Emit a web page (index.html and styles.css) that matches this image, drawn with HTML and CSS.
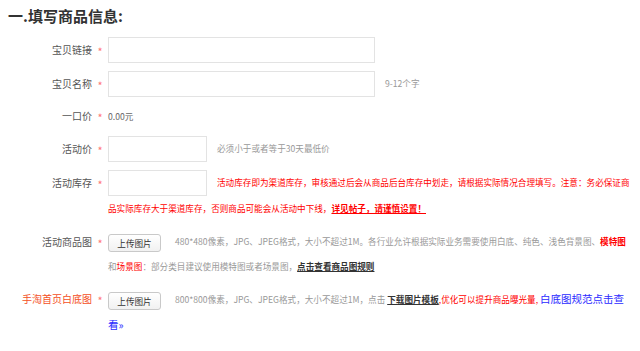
FILE: index.html
```html
<!DOCTYPE html>
<html lang="zh-CN">
<head>
  <meta charset="UTF-8">
  <meta name="viewport" content="width=device-width, initial-scale=1.0">
  <title>填写商品信息</title>
  <link rel="stylesheet" href="styles.css">
</head>
<body>
  <div class="page">
    <h2 class="section-title">一.填写商品信息:</h2>

    <div class="field">
      <label class="field-label">宝贝链接</label>
      <span class="required">*</span>
      <div class="field-body"><input class="text-input wide" type="text"></div>
    </div>

    <div class="field">
      <label class="field-label">宝贝名称</label>
      <span class="required">*</span>
      <div class="field-body hint"><input class="text-input wide" type="text">9-12个字</div>
    </div>

    <div class="field field-plain">
      <label class="field-label">一口价</label>
      <span class="required">*</span>
      <div class="field-body price">0.00元</div>
    </div>

    <div class="field">
      <label class="field-label">活动价</label>
      <span class="required">*</span>
      <div class="field-body hint"><input class="text-input short" type="text">必须小于或者等于30天最低价</div>
    </div>

    <div class="field">
      <label class="field-label">活动库存</label>
      <span class="required">*</span>
      <div class="field-body warn"><input class="text-input short" type="text">活动库存即为渠道库存，审核通过后会从商品后台库存中划走，请根据实际情况合理填写。注意：务必保证商品实际库存大于渠道库存，否则商品可能会从活动中下线，<a class="warn-link" href="#">详见帖子，请谨慎设置！</a></div>
    </div>

    <div class="field field-pic">
      <label class="field-label">活动商品图</label>
      <span class="required">*</span>
      <div class="field-body hint"><button class="upload-btn">上传图片</button>480*480像素，JPG、JPEG格式，大小不超过1M。各行业允许根据实际业务需要使用白底、纯色、浅色背景图、<b class="red">模特图</b>和<span class="red">场景图</span>：部分类目建议使用模特图或者场景图，<a class="dark-link" href="#">点击查看商品图规则</a></div>
    </div>

    <div class="field field-pic">
      <label class="field-label label-hot">手淘首页白底图</label>
      <span class="required">*</span>
      <div class="field-body hint"><button class="upload-btn">上传图片</button>800*800像素，JPG、JPEG格式，大小不超过1M，点击 <a class="dark-link" href="#">下载图片模板</a><span class="red">,优化可以提升商品曝光量,</span> <a class="blue-link" href="#">白底图规范点击查看»</a></div>
    </div>

    <div class="field field-last">
      <label class="field-label label-faint">商品卖点描述</label>
      <span class="required">*</span>
      <div class="field-body hint">填写商品的卖点，限制在15个字以内，请认真填写 <span class="tip">查看示例</span></div>
    </div>
  </div>
</body>
</html>
```

FILE: styles.css
```css
body {
  margin: 0;
  background: #fff;
  font-family: "Noto Sans CJK SC", "Noto Sans", sans-serif;
  color: #555;
  overflow: hidden;
}

.page {
  padding-left: 8px;
}

.section-title {
  margin: 5px 0 10px;
  font-size: 15px;
  line-height: 22px;
  font-weight: bold;
  color: #333;
}

.field {
  display: flex;
  align-items: flex-start;
  margin-bottom: 8px;
}

.field-label {
  width: 84px; /* ends at x 92 with the page padding */
  text-align: right;
  font-size: 10px;
  line-height: 26px;
  color: #555;
  flex-shrink: 0;
}

.required {
  width: 16px;
  flex-shrink: 0;
  text-align: center;
  font-size: 11px;
  line-height: 11px;
  padding-top: 9px;
  color: #f77;
}

.field-body {
  width: 524px;
  font-size: 8.6px;
  line-height: 25px;
}

.field-plain {
  margin-bottom: 9px;
}

.field-plain .field-label,
.field-plain .field-body {
  line-height: 22px;
}

.field-plain .required {
  padding-top: 7px;
}

.field-pic {
  margin-bottom: 7px;
}

.field-pic .field-label {
  line-height: 25px;
}

.field-last {
  margin-bottom: 0;
}

.text-input {
  height: 26px;
  border: 1px solid #e3e3e3;
  box-sizing: border-box;
  vertical-align: top; /* keeps the first line box at the input's height */
  padding: 0 6px;
  margin: 0 10px 0 0;
  outline: none;
}

.text-input.wide {
  width: 267px;
}

.text-input.short {
  width: 99px;
}

.hint {
  color: #999;
}

.price {
  color: #666;
}

.warn {
  color: #f00;
}

.warn-link {
  color: #f00;
  font-weight: bold;
  text-decoration: underline;
}

.upload-btn {
  width: 53px;
  height: 18px;
  padding: 0;
  margin: 0 14px 0 0;
  border: 1px solid #c9c9c9;
  border-radius: 3px;
  background: linear-gradient(#fff, #f1f1f1);
  font-family: inherit;
  font-size: 8.6px;
  color: #333;
  vertical-align: middle;
  cursor: pointer;
}

.red {
  color: #f00;
}

.dark-link {
  color: #333;
  font-weight: bold;
  text-decoration: underline;
}

.blue-link {
  color: #2b2bff;
  font-size: 10.5px;
  text-decoration: none;
}

.label-hot {
  color: #f4501e;
}

.label-faint {
  color: #888;
}

.tip {
  color: #d8b94a;
  margin-left: 4px;
}
```
